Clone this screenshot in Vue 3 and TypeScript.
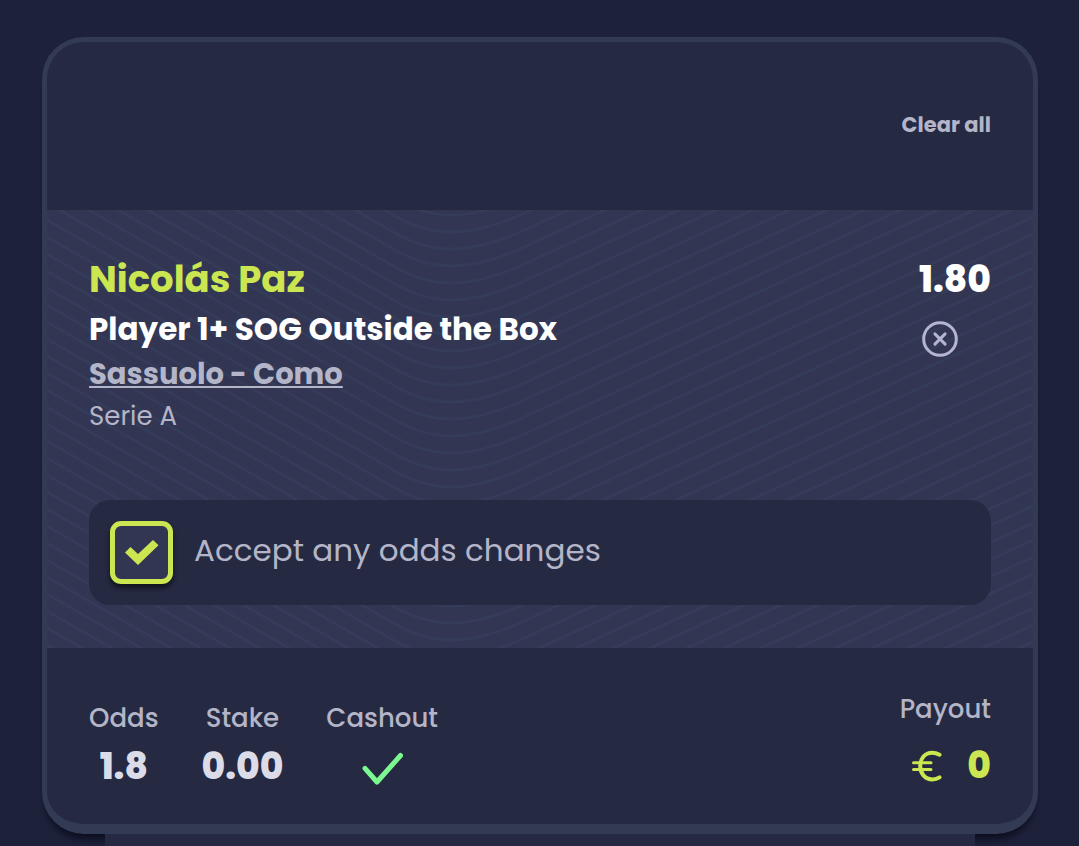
<script setup lang="ts">
import { computed, ref } from 'vue'

interface Selection {
  player: string
  market: string
  match: string
  league: string
  odds: string
}

const selections = ref<Selection[]>([
  {
    player: 'Nicolás Paz',
    market: 'Player 1+ SOG Outside the Box',
    match: 'Sassuolo - Como',
    league: 'Serie A',
    odds: '1.80',
  },
])
const acceptChanges = ref(true)
const totalOdds = computed(() =>
  selections.value.length ? String(selections.value.reduce((t, s) => t * Number(s.odds), 1)) : '0',
)

const waves = Array.from({ length: 42 }, (_, i) => {
  const y = 5 + i * 17
  return `M0 ${y - 216}L348 ${y - 16}Q376 ${y} 405 ${y}Q435 ${y} 473 ${y - 17}L986 ${y - 253}`
})

function clearAll() {
  selections.value = []
}
function remove(index: number) {
  selections.value.splice(index, 1)
}
</script>

<template>
  <main class="page">
    <section class="slip">
      <header class="head">
        <button class="clear" type="button" @click="clearAll">Clear all</button>
      </header>

      <div class="body">
        <svg class="waves" viewBox="0 0 986 438" preserveAspectRatio="xMidYMin slice" aria-hidden="true">
          <path v-for="d in waves" :key="d" :d="d" />
        </svg>

        <article v-for="(s, i) in selections" :key="s.match" class="pick">
          <div class="info">
            <h2 class="player">{{ s.player }}</h2>
            <p class="market">{{ s.market }}</p>
            <a class="match" href="#">{{ s.match }}</a>
            <p class="league">{{ s.league }}</p>
          </div>
          <div class="side">
            <span class="price">{{ s.odds }}</span>
            <button class="remove" type="button" aria-label="Remove" @click="remove(i)">
              <svg viewBox="0 0 36 36" aria-hidden="true">
                <circle cx="18" cy="18" r="16.3" />
                <path d="M12.9 12.9l10.2 10.2M23.1 12.9L12.9 23.1" />
              </svg>
            </button>
          </div>
        </article>

        <label class="accept" for="accept-changes">
          <span class="box">
            <input id="accept-changes" v-model="acceptChanges" type="checkbox" />
            <svg v-if="acceptChanges" viewBox="0 0 34 26" aria-hidden="true">
              <path d="M0 12.5L5.5 7L13 14L28 0L33.5 5.3L13 25Z" />
            </svg>
          </span>
          <span class="accept-text">Accept any odds changes</span>
        </label>
      </div>

      <footer class="foot">
        <dl class="stats">
          <div class="stat">
            <dt>Odds</dt>
            <dd>{{ totalOdds }}</dd>
          </div>
          <div class="stat">
            <dt>Stake</dt>
            <dd>0.00</dd>
          </div>
          <div class="stat">
            <dt>Cashout</dt>
            <dd>
              <svg class="tick" viewBox="0 0 42 34" role="img" aria-label="Available">
                <path d="M4 16.3L16 30L39.5 3.5" />
              </svg>
            </dd>
          </div>
        </dl>
        <dl class="payout">
          <dt>Payout</dt>
          <dd>
            <svg class="euro" viewBox="0 0 32 32" role="img" aria-label="Euro">
              <path class="arc" d="M28.5 4.7C26 3.3 24 2.7 21.3 2.7C13.4 2.7 9.2 9 9.2 16C9.2 23.2 13.8 29.4 21.3 29.4C24.2 29.4 26.5 28.7 28.5 27.4" />
              <path class="bars" d="M2.5 12.7H20M2.5 19.6H20" />
            </svg>
            <span>0</span>
          </dd>
        </dl>
      </footer>
    </section>
    <div class="tray"></div>
  </main>
</template>

<style>
body {
  margin: 0;
  background: #1d213a;
}
</style>

<style scoped>
.page {
  box-sizing: border-box;
  min-height: 100vh;
  padding: 37px 41px 0 42px;
  display: flex;
  flex-direction: column;
  background: #1d213a;
  color: #b4b5c8;
  font-family: Poppins, Inter, "Open Sans", sans-serif;
}
h2,
p,
dl,
dd {
  margin: 0;
}
button {
  border: 0;
  padding: 0;
  background: none;
  color: inherit;
  font-family: inherit;
  cursor: pointer;
}
.slip {
  border: 5px solid #323a54;
  border-bottom-width: 10px;
  border-radius: 42px;
  background: #252a42;
  box-shadow: 0 9px 6px -4px rgba(8, 10, 24, 0.8);
}
.head {
  height: 168px;
  box-sizing: border-box;
  padding: 0 42px 2px;
  display: flex;
  align-items: center;
  justify-content: flex-end;
}
.clear {
  font-size: 21px;
  line-height: 30px;
  font-weight: 700;
}
.body {
  position: relative;
  padding: 42px 42px 43px;
  background: #323653;
}
.waves {
  position: absolute;
  inset: 0;
  width: 100%;
  height: 100%;
}
.waves path {
  fill: none;
  stroke: #343c59;
  stroke-width: 3;
}
.pick {
  position: relative;
  display: flex;
  justify-content: space-between;
  min-height: 206px;
  margin-bottom: 42px;
}
.info {
  display: flex;
  flex-direction: column;
  align-items: flex-start;
}
.player {
  color: #cbe650;
  font-size: 37px;
  line-height: 54px;
  font-weight: 700;
}
.market {
  color: #fff;
  font-size: 31px;
  line-height: 46px;
  font-weight: 700;
}
.match {
  color: inherit;
  font-size: 29px;
  line-height: 44px;
  font-weight: 700;
  text-decoration: underline;
  text-decoration-thickness: 2px;
  text-underline-offset: 2px;
}
.league {
  font-size: 26px;
  line-height: 40px;
}
.side {
  display: flex;
  flex-direction: column;
  align-items: flex-start;
}
.price {
  color: #fff;
  font-size: 36px;
  line-height: 56px;
  font-weight: 800;
}
.remove {
  width: 42px;
  height: 42px;
  margin-top: 10px;
  display: grid;
  place-items: center;
}
.remove svg {
  width: 36px;
  height: 36px;
  fill: none;
  stroke: #b4b5d0;
  stroke-width: 3;
  stroke-linecap: round;
}
.accept {
  position: relative;
  display: flex;
  align-items: center;
  gap: 21px;
  padding: 21px;
  border-radius: 21px;
  background: #252a42;
  font-size: 31px;
  line-height: 48px;
}
.accept-text {
  padding-bottom: 5px;
}
.box {
  display: grid;
  place-items: center;
}
.box > * {
  grid-area: 1 / 1;
}
.box input {
  appearance: none;
  box-sizing: border-box;
  width: 63px;
  height: 63px;
  margin: 0;
  border: 5px solid #cbe650;
  border-radius: 11px;
  background: #323653;
  box-shadow: 0 4px 5px rgba(8, 12, 16, 0.75);
}
.box svg {
  width: 34px;
  height: 26px;
  fill: #cbe650;
  pointer-events: none;
  z-index: 1;
}
.foot {
  min-height: 176px;
  box-sizing: border-box;
  padding: 41px 42px 20px;
  display: flex;
  justify-content: space-between;
  align-items: flex-start;
}
.stats {
  display: flex;
  gap: 43px;
  padding-top: 9px;
}
.stat {
  display: flex;
  flex-direction: column;
  align-items: center;
}
dt {
  font-size: 26px;
  line-height: 40px;
  font-weight: 500;
}
dd {
  display: flex;
  align-items: center;
  height: 58px;
  color: #dcdce8;
  font-size: 36px;
  line-height: 56px;
  font-weight: 800;
}
.tick {
  width: 42px;
  height: 34px;
  margin-top: 4px;
  fill: none;
  stroke: #7cf890;
  stroke-width: 5;
  stroke-linecap: round;
  stroke-linejoin: round;
}
.payout {
  text-align: right;
}
.payout dd {
  height: 74px;
  justify-content: flex-end;
  gap: 24px;
  color: #cbe650;
}
.euro {
  width: 32px;
  height: 32px;
  fill: none;
  stroke: #cbe650;
  stroke-linecap: round;
}
.arc {
  stroke-width: 4;
}
.bars {
  stroke-width: 3;
}
.tray {
  position: relative;
  flex: 1;
  min-height: 12px;
  margin: 0 63px;
  background: #252a42;
}
</style>
